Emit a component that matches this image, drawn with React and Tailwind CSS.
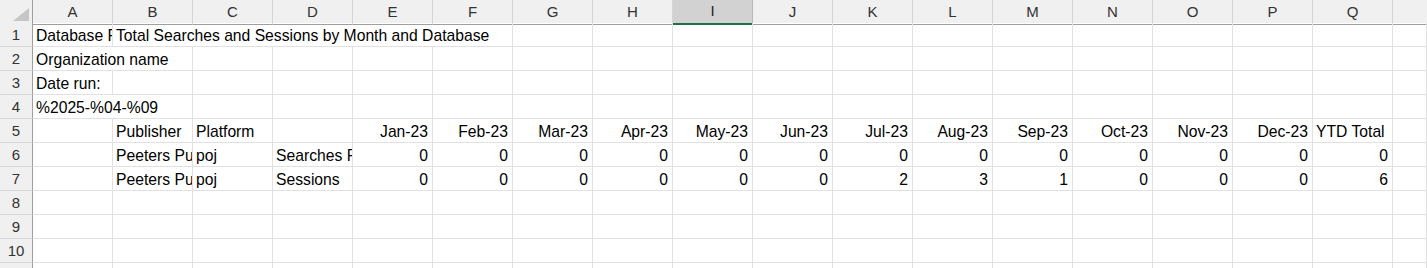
import React from "react";

const COLS = ["A", "B", "C", "D", "E", "F", "G", "H", "I", "J", "K", "L", "M", "N", "O", "P", "Q"];
const MONTHS = ["Jan-23", "Feb-23", "Mar-23", "Apr-23", "May-23", "Jun-23", "Jul-23", "Aug-23", "Sep-23", "Oct-23", "Nov-23", "Dec-23"];

// each row: list of cells { text, span, right }
const ROWS = [
  [{ text: "Database Report" }, { text: "Total Searches and Sessions by Month and Database", span: 5 }],
  [{ text: "Organization name", span: 2 }],
  [{ text: "Date run:" }],
  [{ text: "%2025-%04-%09", span: 2 }],
  [
    {},
    { text: "Publisher" },
    { text: "Platform" },
    {},
    ...MONTHS.map((m) => ({ text: m, right: true })),
    { text: "YTD Total" },
  ],
  [
    {},
    { text: "Peeters Publishers" },
    { text: "poj" },
    { text: "Searches Federated" },
    ...[0, 0, 0, 0, 0, 0, 0, 0, 0, 0, 0, 0, 0].map((n) => ({ text: String(n), right: true })),
  ],
  [
    {},
    { text: "Peeters Publishers" },
    { text: "poj" },
    { text: "Sessions" },
    ...[0, 0, 0, 0, 0, 0, 2, 3, 1, 0, 0, 0, 6].map((n) => ({ text: String(n), right: true })),
  ],
  [],
  [],
  [],
  [],
];

const spanClass = { 1: "", 2: "col-span-2", 5: "col-span-5" };

function Cell({ text, span = 1, right }) {
  return (
    <div
      className={`h-6 border-r border-b border-[#e1e1e1] flex items-center pt-[2px] px-[3px] overflow-hidden whitespace-nowrap text-black ${
        right ? "justify-end pr-[4px]" : ""
      } ${spanClass[span]}`}
    >
      {text}
    </div>
  );
}

function fillRow(cells) {
  const out = [...cells];
  let used = cells.reduce((s, c) => s + (c.span || 1), 0);
  while (used < 18) {
    out.push({});
    used++;
  }
  return out;
}

export default function App() {
  return (
    <div
      className="w-[1427px] h-[268px] overflow-hidden bg-white text-[15.7px]"
      style={{ fontFamily: '"Liberation Sans", Arial, sans-serif' }}
    >
      {/* column headers */}
      <div className="grid grid-cols-[33px_repeat(17,80px)_1fr] h-[23px] bg-[#f0f0f0] text-[15px] text-[#333]">
        <div className="border-r border-b border-[#9f9f9f] flex items-end justify-end pr-[3px] pb-[3px]">
          <svg width="16" height="13" viewBox="0 0 16 13">
            <polygon points="16,0 16,13 0,13" fill="#c6c6c6" />
          </svg>
        </div>
        {COLS.map((c) =>
          c === "I" ? (
            <div
              key={c}
              className="bg-[#d2d2d2] border-r border-[#b8b8b8] border-b-2 border-b-[#1e7145] flex items-center justify-center text-[#1f1f1f]"
            >
              {c}
            </div>
          ) : (
            <div
              key={c}
              className="border-r border-r-[#d5d5d5] border-b border-b-[#9f9f9f] flex items-center justify-center"
            >
              {c}
            </div>
          )
        )}
        <div className="border-b border-[#9f9f9f]" />
      </div>

      {/* sheet rows */}
      {ROWS.map((cells, r) => (
        <div key={r} className="grid grid-cols-[33px_repeat(17,80px)_1fr]">
          <div className="h-6 bg-[#f0f0f0] border-r border-r-[#9f9f9f] border-b border-b-[#d5d5d5] flex items-center justify-center pt-[1px] text-[15px] text-[#333]">
            {r + 1}
          </div>
          {fillRow(cells).map((c, i) => (
            <Cell key={i} {...c} />
          ))}
        </div>
      ))}
    </div>
  );
}
